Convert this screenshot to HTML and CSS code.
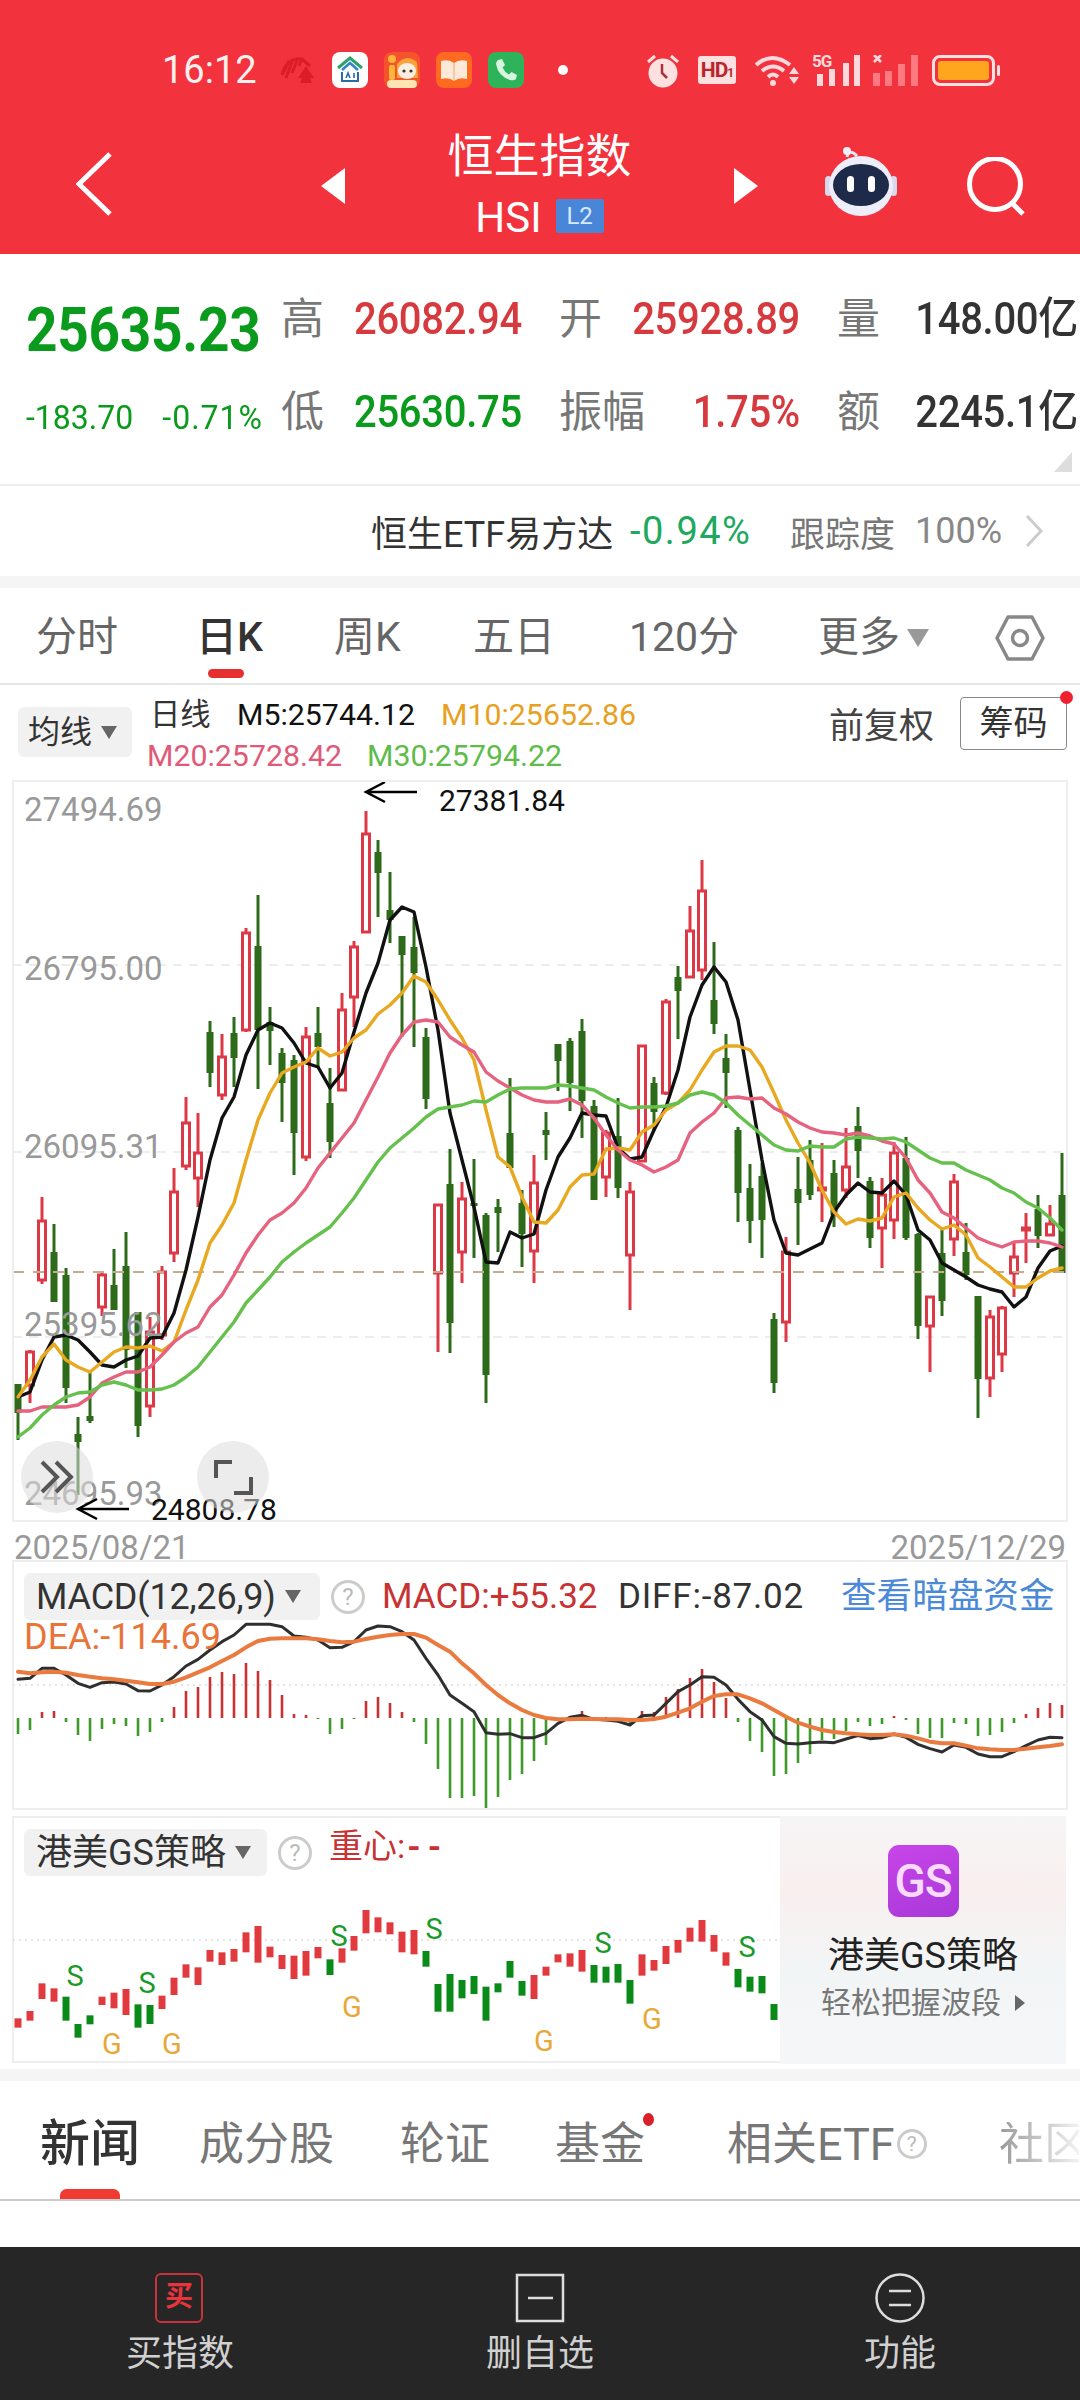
FILE: index.html
```html
<!DOCTYPE html>
<html lang="zh-CN">
<head>
<meta charset="utf-8">
<title>恒生指数</title>
<link rel="stylesheet" href="styles.css">
</head>
<body>
<header class="top">
  <div class="status">
    <span class="clock">16:12</span>
    <svg class="ic shell" viewBox="0 0 35 27"><g fill="none" stroke="#dc1c28" stroke-width="3"><path d="M2 18 9 4M6 21 13 2M12 16 18 1M19 9 22 2M2 18C4 8 12 0 22 2L30 9"/></g><path d="M26 9 34 21H30L32 26H20L22 21H18Z" fill="#dc1c28"/></svg>
    <svg class="ic app" viewBox="0 0 36 36"><rect width="36" height="36" rx="8" fill="#fff"/><path d="M6 16 18 6 30 16" fill="none" stroke="#2fa36b" stroke-width="3"/><path d="M10 18 18 11 26 18" fill="none" stroke="#2f86c8" stroke-width="2.5"/><path d="M10 20V29H26V20" fill="none" stroke="#2b6ca8" stroke-width="2"/><path d="M14 26 16 21 18 26M22 21V26" fill="none" stroke="#2b6ca8" stroke-width="1.6"/></svg>
    <svg class="ic app" viewBox="0 0 36 36"><rect width="36" height="36" rx="8" fill="#f4532c"/><circle cx="8" cy="7" r="4" fill="#ffb53a"/><rect x="5" y="13" width="6" height="15" rx="2" fill="#ffb53a"/><path d="M13 12Q22 1 33 10L34 26H13Z" fill="#f7a23a"/><ellipse cx="23" cy="19" rx="9" ry="8" fill="#fbeee0"/><circle cx="20" cy="19" r="1.6" fill="#333"/><circle cx="27" cy="19" r="1.6" fill="#333"/><rect x="3" y="28" width="30" height="8" rx="4" fill="#ffe3b0"/></svg>
    <svg class="ic app" viewBox="0 0 36 36"><rect width="36" height="36" rx="8" fill="#ff6a20"/><path d="M5 9Q13 7 18 11Q23 7 31 9V27Q23 25 18 29Q13 25 5 27Z" fill="#fde9d8"/><path d="M18 11V29" stroke="#f5b88f" stroke-width="1.4"/></svg>
    <svg class="ic app" viewBox="0 0 36 36"><rect width="36" height="36" rx="8" fill="#2fb35a"/><path d="M10 8 14 7 17 13 14.5 15.5Q16.5 20 21 22.5L23.5 20 29 23 28 27Q26 29 22 28Q10 24 8 12Q8 10 10 8Z" fill="#d8f5df"/></svg>
    <span class="dot"></span>
    <svg class="ic alarm" viewBox="0 0 32 35"><circle cx="16" cy="20" r="14.5" fill="#fde0e0"/><path d="M1 9 8 3M31 9 24 3" stroke="#fde0e0" stroke-width="3"/><path d="M15 11V20L20 25" fill="none" stroke="#a83038" stroke-width="2.5"/></svg>
    <span class="hd">HD<small>1</small></span>
    <svg class="ic wifi" viewBox="0 0 45 32"><g fill="none" stroke="#ffd9dc" stroke-width="4"><path d="M1 11Q17-3 35 11"/><path d="M7 17Q18 8 29 17"/><path d="M13 23Q18 18 23 23"/></g><circle cx="18" cy="29" r="3" fill="#ffd9dc"/><path d="M39 13 44 20H34ZM34 23H44L39 30Z" fill="#ffd9dc"/></svg>
    <div class="signal">
      <span class="net">5G</span>
      <svg class="bars" viewBox="0 0 45 31"><path d="M2 19H8V31H2ZM14 14H20V31H14ZM28 8H34V31H28ZM39 0H45V31H39Z" fill="#ffd9dc"/></svg>
    </div>
    <svg class="ic sig2" viewBox="0 0 46 31"><path d="M1 0 8 7M8 0 1 7" stroke="#ffd9dc" stroke-width="2.6"/><path d="M0 18H7V31H0ZM12 16H19V31H12ZM25 9H32V31H25ZM38 0H45V31H38Z" fill="#ff7a80"/></svg>
    <div class="battery"><i></i></div>
  </div>
  <nav class="nav">
    <svg class="back" viewBox="0 0 36 64"><path d="M34 2 3 32 34 62" fill="none" stroke="#fff" stroke-width="5"/></svg>
    <span class="tri tri-left"></span>
    <div class="title">
      <h1>恒生指数</h1>
      <div class="code">HSI<b>L2</b></div>
    </div>
    <span class="tri tri-right"></span>
    <svg class="robot" viewBox="0 0 72 72"><path d="M22 11Q24 2 32 10" fill="none" stroke="#e8e8f4" stroke-width="3"/><circle cx="22" cy="5" r="4" fill="#f0eef8"/><rect x="0" y="30" width="7" height="20" rx="3.500" fill="#d8d8ee"/><rect x="65" y="30" width="7" height="20" rx="3.500" fill="#d8d8ee"/><ellipse cx="36" cy="40" rx="32" ry="30" fill="#eeeefa"/><ellipse cx="36" cy="39" rx="28" ry="21" fill="#1e2a4a"/><rect x="22" y="30" width="7" height="16" rx="3.500" fill="#fff"/><rect x="43" y="30" width="7" height="16" rx="3.500" fill="#fff"/></svg>
    <svg class="search" viewBox="0 0 60 60"><circle cx="28" cy="27" r="25.500" fill="none" stroke="#fff" stroke-width="5"/><path d="M45 46 56 57" stroke="#fff" stroke-width="5"/></svg>
  </nav>
</header>

<section class="quote">
  <div class="price down">25635.23</div>
  <span class="label">高</span><span class="val up">26082.94</span>
  <div class="pair"><span class="label">开</span><span class="val up">25928.89</span></div>
  <div class="pair far"><span class="label">量</span><span class="val dark">148.00亿</span></div>
  <div class="change down"><span>-183.70</span><span class="pct">-0.71%</span></div>
  <span class="label">低</span><span class="val down">25630.75</span>
  <div class="pair"><span class="label">振幅</span><span class="val up">1.75%</span></div>
  <div class="pair far"><span class="label">额</span><span class="val dark">2245.1亿</span></div>
  <span class="corner"></span>
</section>

<section class="etf">
  <span class="etf-name">恒生ETF易方达</span>
  <span class="etf-pct">-0.94%</span>
  <span class="etf-lbl">跟踪度</span>
  <span class="etf-num">100%</span>
  <svg class="chev" viewBox="0 0 18 34"><path d="M2 2 16 17 2 32" fill="none" stroke="#ccc" stroke-width="3"/></svg>
</section>

<div class="band"></div>

<div class="periods">
  <span>分时</span>
  <span class="on">日K</span>
  <span>周K</span>
  <span>五日</span>
  <span>120分</span>
  <span class="more">更多<i class="caret big"></i></span>
  <svg class="hex" viewBox="0 0 50 46"><path d="M13 2H37L48 23 37 44H13L2 23Z" fill="none" stroke="#888" stroke-width="3.500" stroke-linejoin="round"/><circle cx="25" cy="23" r="7.500" fill="none" stroke="#888" stroke-width="3.500"/></svg>
</div>

<div class="legend">
  <div class="pill ma-pill">均线<i class="caret"></i></div>
  <div class="ma-vals">
    <div class="ma-line"><span class="day">日线</span><span class="m5">M5:25744.12</span><span class="m10">M10:25652.86</span></div>
    <div class="ma-line"><span class="m20">M20:25728.42</span><span class="m30">M30:25794.22</span></div>
  </div>
  <span class="adjust">前复权</span>
  <span class="chips">筹码</span>
</div>

<svg id="kline" class="panel-svg kline" viewBox="12 780 1056 742">
  <g class="grid">
    <path d="M13 965H1066M13 1152H1066M13 1337H1066"/>
  </g>
  <g id="candles"></g>
  <path class="base" d="M13 1272H1066"/>
  <g id="averages"></g>
  <text class="axis" x="24" y="821">27494.69</text>
  <text class="axis" x="24" y="980">26795.00</text>
  <text class="axis" x="24" y="1158">26095.31</text>
  <text class="axis" x="24" y="1336">25395.62</text>
  <text class="axis" x="24" y="1505">24695.93</text>
  <path class="arrow" d="M417 792H366M385 782 366 792 385 802"/>
  <text class="peak" x="439" y="811">27381.84</text>
  <path class="arrow" d="M129 1509H78M97 1499 78 1509 97 1519"/>
  <text class="peak" x="151" y="1520">24808.78</text>
  <circle class="fab" cx="57" cy="1477" r="36"/>
  <path class="fab-mark" d="M42 1462 57 1477 42 1492M56 1462 71 1477 56 1492"/>
  <circle class="fab" cx="233" cy="1477" r="36"/>
  <path class="fab-mark" d="M216 1478V1462H232M251 1477V1493H234"/>
</svg>

<div class="dates"><span>2025/08/21</span><span>2025/12/29</span></div>

<div class="panel macd">
  <svg id="macd" class="panel-svg" viewBox="12 1560 1056 250">
    <path class="dots" d="M13 1685H1066"/>
    <g id="hist"></g>
    <g id="macd-lines"></g>
  </svg>
  <div class="panel-head">
    <div class="pill macd-pill">MACD(12,26,9)<i class="caret"></i></div>
    <span class="help">?</span>
    <span class="mv up-d">MACD:+55.32</span>
    <span class="mv diff">DIFF:-87.02</span>
    <span class="mv link">查看暗盘资金</span>
    <span class="mv dea">DEA:-114.69</span>
  </div>
</div>

<div class="panel gs">
  <div class="gs-chart">
    <svg id="gs" viewBox="12 1816 768 247">
      <path class="dots" d="M13 1940H780"/>
      <g id="gs-bars"></g>
      <g class="sig-s">
        <text x="75" y="1986">S</text><text x="147" y="1993">S</text><text x="339" y="1946">S</text>
        <text x="434" y="1939">S</text><text x="603" y="1953">S</text><text x="747" y="1957">S</text>
      </g>
      <g class="sig-g">
        <text x="112" y="2054">G</text><text x="172" y="2054">G</text><text x="352" y="2017">G</text>
        <text x="544" y="2051">G</text><text x="652" y="2029">G</text>
      </g>
    </svg>
    <div class="panel-head">
      <div class="pill gs-pill">港美GS策略<i class="caret"></i></div>
      <span class="help">?</span>
      <span class="mv gravity">重心:<span class="dash">--</span></span>
    </div>
  </div>
  <aside class="promo">
    <div class="promo-logo">GS</div>
    <div class="promo-name">港美GS策略</div>
    <div class="promo-sub">轻松把握波段<i class="promo-arrow"></i></div>
  </aside>
</div>

<div class="band after-gs"></div>

<div class="news-tabs">
  <span class="on">新闻<i class="mark"></i></span>
  <span>成分股</span>
  <span>轮证</span>
  <span class="fund">基金<i class="red-dot"></i></span>
  <span class="rel">相关ETF<em class="help small">?</em></span>
  <span class="fade">社区</span>
</div>

<div class="blank"></div>

<footer class="actions">
  <div class="act">
    <div class="buy-icon">买</div>
    <span>买指数</span>
  </div>
  <div class="act">
    <svg class="act-icon" viewBox="0 0 50 50"><path d="M2 2H48V48H2Z" fill="none" stroke="#ddd" stroke-width="2.500"/><path d="M13 25H38" stroke="#ddd" stroke-width="2.500"/></svg>
    <span>删自选</span>
  </div>
  <div class="act">
    <svg class="act-icon" viewBox="0 0 50 50"><circle cx="25" cy="25" r="23.500" fill="none" stroke="#ddd" stroke-width="2.500"/><path d="M14 18H36M14 32H36" stroke="#ddd" stroke-width="2.500"/></svg>
    <span>功能</span>
  </div>
</footer>
<script src="chart.js"></script>
</body>
</html>
```

FILE: styles.css
```css
* { box-sizing: border-box; }
html, body { margin: 0; padding: 0; }
body {
  width: 1080px;
  height: 2400px;
  overflow: hidden;
  background: #fff;
  font-family: Roboto, "Noto Sans CJK SC", sans-serif;
  color: #333;
}
i, em { font-style: normal; }

/* red page header */
.top { height: 254px; background: #f2323c; color: #fff; }
.status { height: 100px; padding: 40px 0 0 162px; display: flex; align-items: center; }
.clock { font-size: 38px; width: 118px; color: #fdf0f0; }
.ic { display: block; flex: none; }
.shell { width: 35px; height: 27px; margin-right: 17px; }
.app { width: 36px; height: 36px; margin-right: 16px; }
.dot { width: 10px; height: 10px; border-radius: 50%; background: #fff; margin: 0 79px 0 18px; }
.alarm { width: 32px; height: 35px; margin-right: 19px; }
.hd {
  width: 38px; height: 28px; margin-right: 19px;
  background: #fde0e0; border-radius: 3px; color: #b8262e;
  font-size: 21px; font-weight: 700; line-height: 28px; text-align: center; letter-spacing: -1px;
  white-space: nowrap; overflow: hidden;
}
.hd small { font-size: 12px; }
.wifi { width: 45px; height: 32px; margin-right: 12px; }
.signal { position: relative; width: 48px; height: 32px; margin-right: 13px; }
.net { position: absolute; left: 0; top: -3px; font-size: 17px; font-weight: 700; color: #ffd9dc; line-height: 20px; letter-spacing: -1px; }
.bars { position: absolute; left: 3px; bottom: 0; width: 45px; height: 31px; }
.sig2 { width: 46px; height: 31px; margin-right: 13px; }
.battery { position: relative; width: 63px; height: 31px; border: 3px solid #fde0e0; border-radius: 8px; padding: 3px; }
.battery::after { content: ""; position: absolute; right: -8px; top: 7px; width: 3px; height: 11px; background: #fde0e0; border-radius: 2px; }
.battery i { display: block; height: 100%; background: #ffa51e; border-radius: 3px; }

.nav { height: 154px; display: flex; align-items: flex-start; }
.back { width: 36px; height: 64px; margin: 52px 0 0 76px; }
.tri { width: 0; height: 0; margin-top: 68px; border-top: 18px solid transparent; border-bottom: 18px solid transparent; }
.tri-left { margin-left: 209px; border-right: 24px solid #fff; }
.tri-right { border-left: 24px solid #fff; }
.title { width: 389px; text-align: center; }
.title h1 { margin: 30px 0 0; font-size: 46px; font-weight: 400; line-height: 52px; }
.code { margin-top: 17px; display: flex; justify-content: center; align-items: center; height: 36px; font-size: 42px; }
.code b { margin: 0 0 2px 14px; width: 48px; height: 34px; background: #4a86d8; color: #d9eaff; font-size: 24px; font-weight: 400; line-height: 34px; text-align: center; border-radius: 2px; }
.robot { width: 72px; height: 72px; margin: 46px 0 0 67px; }
.search { width: 60px; height: 60px; margin: 57px 0 0 70px; }

/* quote figures */
.quote {
  position: relative;
  height: 232px;
  padding: 19px 0 0 26px;
  border-bottom: 2px solid #ececec;
  display: grid;
  grid-template-columns: 256px 72px 206px 240px 278px;
  grid-auto-rows: 93px;
  align-items: center;
}
.label { font-size: 43px; color: #777; line-height: 1; margin-left: -1px; }
.val { font-size: 40px; font-weight: 500; letter-spacing: -.3px; line-height: 1; display: inline-block; transform: scaleY(1.1); }
.up { color: #d63a3e; }
.down { color: #0a9a1c; }
.dark { color: #333; }
.price { font-size: 55px; font-weight: 700; letter-spacing: -.3px; padding-top: 18px; transform: scaleY(1.1); }
.change { font-size: 32px; padding-top: 8px; display: flex; width: 237px; justify-content: space-between; transform: scaleY(1.05); }
.pct { letter-spacing: 1px; }
.pair { display: flex; justify-content: space-between; align-items: center; }
.far { padding-left: 38px; }
.corner { position: absolute; right: 8px; bottom: 12px; width: 18px; height: 20px; background: #ddd; clip-path: polygon(100% 0, 100% 100%, 0 100%); }

.etf { height: 90px; display: flex; align-items: center; padding-left: 371px; white-space: nowrap; }
.etf-name { font-size: 36px; color: #333; width: 259px; }
.etf-pct { font-size: 38px; color: #1ea860; width: 160px; letter-spacing: 1.500px; }
.etf-lbl { font-size: 35px; color: #777; width: 125px; }
.etf-num { font-size: 36px; color: #888; width: 110px; }
.chev { width: 18px; height: 34px; }

.band { height: 12px; background: #f5f5f5; }

/* period tabs */
.periods {
  position: relative;
  height: 97px;
  padding: 4px 35px 0 36px;
  border-bottom: 2px solid #e6e6e6;
  display: grid;
  grid-template-columns: 160px 138px 139px 156px 189px 177px 50px;
  align-items: center;
  font-size: 41px;
  color: #666;
  line-height: 1;
}
.periods .on { position: relative; color: #333; font-weight: 500; }
.periods .on::after { content: ""; position: absolute; left: 12px; top: 52px; width: 36px; height: 9px; background: #e5302f; border-radius: 5px; }
.more { display: flex; align-items: center; }
.caret { display: inline-block; width: 0; height: 0; border-left: 8px solid transparent; border-right: 8px solid transparent; border-top: 13px solid #666; margin-left: 9px; }
.caret.big { border-left-width: 11px; border-right-width: 11px; border-top-width: 18px; border-top-color: #999; margin-left: 7px; }
.hex { width: 50px; height: 46px; }

/* moving-average legend */
.legend { height: 95px; display: flex; position: relative; }
.pill { background: #f1f1f1; border-radius: 6px; display: flex; align-items: center; color: #333; line-height: 1; white-space: nowrap; }
.ma-pill { width: 114px; height: 50px; margin: 22px 0 0 18px; padding-left: 10px; font-size: 32px; }
.ma-vals { margin-left: 16px; padding-top: 9px; font-size: 30.300px; line-height: 41px; white-space: nowrap; width: 679px; }
.ma-line { display: flex; }
.day { width: 89px; color: #333; padding-left: 2px; }
.m5 { width: 204px; color: #111; }
.m10 { color: #e8a020; }
.m20 { width: 220px; color: #e05a78; margin-left: -1px; }
.m30 { color: #5ebc4a; }
.adjust { font-size: 35px; color: #444; line-height: 1; margin: 24px 0 0 2px; width: 131px; }
.chips { width: 107px; height: 53px; margin-top: 12px; border: 1.500px solid #888; border-radius: 4px; font-size: 34px; line-height: 50px; text-align: center; color: #333; position: relative; }
.chips::after { content: ""; position: absolute; right: -7px; top: -7px; width: 13px; height: 13px; border-radius: 50%; background: #f02030; }

/* drawn charts */
.panel-svg { display: block; overflow: visible; outline: 2px solid #eee; outline-offset: -2px; margin-left: 12px; }
.kline { width: 1056px; height: 742px; }
.grid path { stroke: #e8e8e8; stroke-width: 1.500; stroke-dasharray: 9 7; fill: none; }
.base { stroke: #c4ad8f; stroke-width: 2; stroke-dasharray: 11 9; fill: none; }
.axis { font-size: 33px; fill: #999; font-family: Roboto, sans-serif; }
.peak { font-size: 30px; fill: #111; font-family: Roboto, sans-serif; }
.arrow { fill: none; stroke: #000; stroke-width: 2.500; }
.fab { fill: #dcdcdc; fill-opacity: .55; }
.fab-mark { fill: none; stroke: #555; stroke-width: 4; }
.body-up { fill: #fff; stroke: #dc3845; stroke-width: 3; }
.body-down { fill: #2d6b1a; }
.wick-up { stroke: #dc3845; stroke-width: 3; }
.wick-down { stroke: #2d6b1a; stroke-width: 3; }
.ln { fill: none; stroke-width: 3.400; stroke-linejoin: round; stroke-linecap: round; }
.ma5 { stroke: #111; }
.ma10 { stroke: #e8a820; }
.ma20 { stroke: #e6627e; }
.ma30 { stroke: #66c04e; }
.dates { height: 38px; padding: 8px 14px 0 14px; display: flex; justify-content: space-between; font-size: 33px; color: #999; line-height: 36px; }

.panel { position: relative; }
.macd #macd { width: 1056px; height: 250px; }
.dots { stroke: #ddd; stroke-width: 1.500; stroke-dasharray: 2 4; fill: none; }
.hist-up { stroke: #c83232; stroke-width: 2.600; }
.hist-down { stroke: #3d9a28; stroke-width: 2.600; }
.ln.diffline { stroke: #2f2f2f; stroke-width: 3; }
.ln.dealine { stroke: #ea7a3e; stroke-width: 4; }
.panel-head { position: absolute; left: 24px; top: 13px; right: 14px; display: flex; flex-wrap: wrap; align-items: center; white-space: nowrap; }
.macd-pill { width: 296px; height: 47px; padding-left: 12px; font-size: 36px; letter-spacing: -.2px; }
.help {
  display: inline-block; width: 34px; height: 34px; margin-left: 11px;
  border: 3px solid #ccc; border-radius: 50%; color: #bbb;
  font-size: 24px; line-height: 28px; text-align: center;
}
.help.small { width: 30px; height: 30px; margin-left: 2px; font-size: 21px; line-height: 25px; }
.mv { font-size: 35px; line-height: 47px; }
.up-d { color: #c83232; margin-left: 17px; width: 236px; }
.diff { color: #333; width: 223px; letter-spacing: .8px; }
.link { color: #4a8ad8; font-size: 35.600px; }
.dea { width: 100%; color: #e8743a; font-size: 36px; line-height: 40px; margin-top: -3px; }

.gs { margin-top: 6px; display: flex; height: 247px; padding-left: 12px; }
.gs-chart { position: relative; width: 768px; box-shadow: inset 2px 2px 0 #eee, inset 0 -2px 0 #eee; }
#gs { display: block; width: 768px; height: 247px; }
.gs-chart .panel-head { left: 12px; top: 13px; }
.gs-pill { width: 243px; height: 47px; padding-left: 12px; font-size: 36px; }
.gravity { color: #c83232; font-size: 34px; margin: -13px 0 0 17px; }
.dash { font-weight: 700; letter-spacing: 7px; margin-left: 2px; }
.gs-bar-up { stroke: #e03a3e; stroke-width: 7; }
.gs-bar-down { stroke: #0a8a18; stroke-width: 7; }
.sig-s text, .sig-g text { font-size: 29px; text-anchor: middle; font-family: Roboto, sans-serif; }
.sig-s text { fill: #1a9a2a; }
.sig-g text { fill: #e8a838; }
.promo {
  width: 286px; height: 248px;
  background: linear-gradient(180deg, #f6f5f6 0, #f9efef 30%, #f2f5f6 62%, #f5f6f7 100%);
  display: flex; flex-direction: column; align-items: center;
}
.promo-logo {
  width: 71px; height: 72px; margin-top: 29px;
  background: linear-gradient(160deg, #c845e8, #a838d8);
  border-radius: 11px; color: #fbdcff;
  font-size: 46px; font-weight: 500; line-height: 72px; text-align: center; letter-spacing: -1px;
}
.promo-name { font-size: 36px; color: #222; line-height: 44px; margin-top: 17px; }
.promo-sub { display: flex; align-items: center; font-size: 30px; color: #777; line-height: 40px; margin-top: 5px; }
.promo-arrow { width: 0; height: 0; margin-left: 14px; border-top: 8px solid transparent; border-bottom: 8px solid transparent; border-left: 10px solid #666; }

.after-gs { margin-top: 6px; }

/* lower tabs */
.news-tabs {
  height: 120px;
  padding: 8px 0 0 40px;
  border-bottom: 2px solid #ccc;
  display: grid;
  grid-template-columns: 159px 201px 155px 172px 272px 80px;
  align-items: center;
  font-size: 45px;
  color: #777;
  line-height: 1;
  white-space: nowrap;
  overflow: hidden;
}
.news-tabs span { position: relative; }
.news-tabs .on { color: #333; font-size: 50px; font-weight: 500; }
.mark { position: absolute; left: 20px; top: 70px; width: 60px; height: 13px; background: #f03a32; border-radius: 7px 7px 0 0 / 7px; }
.red-dot { position: absolute; left: 88px; top: -9px; width: 11px; height: 13px; border-radius: 50%; background: #d8202a; }
.rel { display: flex; align-items: center; }
.fade { background: linear-gradient(90deg, #999, #f2f2f2); -webkit-background-clip: text; background-clip: text; color: transparent; }

.blank { height: 46px; }

/* bottom action bar */
.actions { height: 153px; background: #262626; display: flex; }
.act { width: 360px; display: flex; flex-direction: column; align-items: center; padding-top: 26px; }
.act span { font-size: 36px; line-height: 44px; color: #d0d0d0; margin-top: 9px; }
.act-icon { width: 50px; height: 50px; display: block; }
.buy-icon {
  width: 48px; height: 50px; margin-left: -2px;
  border: 2.500px solid #c8323a; border-radius: 6px;
  color: #e8343c; font-size: 28px; font-weight: 700; line-height: 44px; text-align: center;
}
```

FILE: chart.js
```js
// Daily candles for the index: [high, body top, body bottom, low, direction].
// Figures are plot coordinates, so the SVG viewBoxes use the page's y scale.
const candles = [
  [1384,1384,1413,1440,'g'],[1350,1352,1385,1403,'r'],[1197,1221,1280,1284,'r'],[1224,1252,1302,1302,'g'],
  [1268,1275,1388,1403,'g'],[1417,1434,1442,1495,'g'],[1370,1416,1421,1423,'g'],[1273,1275,1307,1316,'r'],
  [1249,1285,1310,1310,'g'],[1232,1266,1350,1368,'g'],[1312,1312,1426,1437,'g'],[1317,1332,1406,1417,'r'],
  [1266,1272,1335,1340,'r'],[1168,1192,1253,1262,'r'],[1097,1123,1166,1170,'r'],[1113,1153,1178,1207,'r'],
  [1021,1032,1073,1087,'g'],[1034,1057,1095,1100,'r'],[1017,1033,1058,1087,'g'],[928,933,1030,1032,'r'],
  [895,946,1030,1089,'g'],[1007,1022,1031,1065,'g'],[1048,1053,1083,1122,'g'],[1055,1060,1133,1175,'g'],
  [1027,1037,1157,1161,'r'],[1007,1033,1047,1067,'g'],[1068,1103,1142,1158,'g'],[993,1010,1090,1091,'r'],
  [941,947,997,1027,'r'],[811,834,932,932,'r'],[840,852,873,917,'g'],[872,910,920,943,'g'],
  [936,936,955,1037,'g'],[917,947,973,1047,'g'],[1028,1037,1099,1109,'g'],[1205,1205,1273,1352,'r'],
  [1149,1184,1323,1353,'g'],[1182,1199,1252,1283,'r'],[1159,1203,1206,1258,'g'],[1213,1215,1375,1403,'g'],
  [1199,1207,1213,1252,'g'],[1078,1133,1168,1168,'g'],[1190,1203,1234,1267,'g'],[1155,1183,1251,1283,'r'],
  [1112,1130,1135,1160,'g'],[1044,1044,1061,1091,'g'],[1038,1041,1083,1111,'g'],[1019,1031,1101,1138,'g'],
  [1100,1106,1200,1200,'g'],[1130,1133,1177,1197,'r'],[1098,1136,1188,1198,'g'],[1182,1192,1255,1310,'r'],
  [1045,1046,1161,1161,'r'],[1077,1083,1112,1131,'g'],[999,1002,1093,1095,'r'],[966,977,991,1039,'g'],
  [906,931,977,978,'r'],[860,891,970,980,'r'],[942,1000,1024,1034,'g'],[1034,1058,1073,1108,'g'],
  [1127,1130,1193,1222,'g'],[1164,1188,1221,1243,'g'],[1163,1176,1220,1258,'g'],[1313,1319,1383,1393,'g'],
  [1237,1252,1322,1342,'r'],[1157,1189,1203,1245,'g'],[1140,1160,1195,1200,'g'],[1143,1188,1190,1222,'r'],
  [1160,1173,1215,1227,'g'],[1128,1167,1190,1198,'r'],[1107,1126,1151,1178,'g'],[1177,1181,1238,1248,'g'],
  [1178,1195,1228,1268,'r'],[1142,1153,1220,1239,'r'],[1137,1158,1238,1240,'g'],[1233,1234,1326,1339,'g'],
  [1297,1297,1326,1372,'r'],[1229,1253,1301,1316,'g'],[1174,1182,1239,1256,'r'],[1223,1252,1275,1280,'g'],
  [1296,1296,1379,1418,'g'],[1310,1317,1378,1397,'r'],[1306,1308,1354,1372,'r'],[1243,1257,1273,1297,'r'],
  [1213,1228,1230,1263,'r'],[1195,1209,1236,1248,'g'],[1205,1224,1235,1235,'r'],[1153,1195,1273,1273,'g']
];

const averages = {
  ma5: [1397,1392,1360,1337,1335,1340,1352,1365,1367,1360,1356,1338,1337,1313,1270,1217,1160,1118,1097,1055,1030,1023,1028,1043,1063,1067,1088,1073,1032,993,963,920,907,912,967,1030,1113,1160,1207,1262,1263,1232,1238,1234,1190,1157,1138,1113,1115,1116,1148,1159,1157,1130,1107,1070,1017,985,967,982,1020,1090,1160,1220,1253,1255,1249,1243,1212,1195,1183,1192,1193,1181,1195,1230,1240,1263,1270,1277,1285,1289,1292,1307,1297,1268,1251,1246],
  ma10: [1397,1380,1357,1344,1360,1367,1372,1362,1352,1347,1348,1346,1351,1342,1310,1280,1243,1225,1203,1160,1120,1093,1073,1067,1062,1048,1056,1052,1038,1030,1014,1005,993,976,982,1000,1020,1038,1060,1110,1157,1167,1197,1222,1223,1210,1187,1175,1174,1149,1148,1150,1132,1125,1110,1103,1090,1070,1052,1046,1046,1050,1067,1093,1120,1143,1163,1190,1212,1224,1219,1221,1218,1197,1193,1208,1220,1229,1225,1235,1258,1267,1277,1287,1287,1278,1271,1268],
  ma20: [1411,1411,1407,1407,1407,1405,1397,1383,1377,1372,1372,1367,1355,1342,1333,1327,1307,1295,1275,1253,1235,1220,1213,1203,1188,1168,1153,1138,1123,1100,1077,1053,1035,1022,1020,1022,1037,1045,1052,1072,1081,1088,1095,1100,1102,1102,1099,1105,1118,1135,1150,1160,1165,1172,1167,1160,1133,1122,1113,1098,1097,1099,1098,1108,1114,1122,1128,1132,1133,1135,1133,1136,1141,1144,1158,1180,1193,1212,1218,1228,1238,1243,1247,1242,1241,1241,1243,1247],
  ma30: [1437,1428,1415,1405,1397,1393,1392,1385,1382,1385,1390,1390,1389,1385,1377,1367,1352,1337,1322,1303,1290,1277,1262,1252,1243,1235,1227,1213,1198,1180,1162,1148,1138,1128,1117,1109,1107,1105,1101,1102,1095,1089,1088,1088,1088,1085,1086,1088,1090,1097,1103,1108,1107,1107,1106,1103,1095,1092,1095,1103,1115,1125,1135,1145,1150,1151,1146,1147,1147,1139,1137,1138,1139,1138,1142,1150,1158,1163,1163,1170,1175,1180,1188,1193,1202,1208,1218,1230]
};

// MACD histogram bar lengths in px; positive bars rise above the zero line.
const histogram = [-16,-12,6,7,-4,-17,-23,-11,-6,-8,-18,-14,-4,11,27,31,41,46,44,55,47,38,23,4,3,-1,-16,-11,-1,17,21,15,6,-4,-26,-51,-80,-80,-78,-92,-79,-62,-56,-43,-27,-2,2,7,1,1,-2,-6,7,6,21,29,40,49,36,20,-4,-23,-34,-58,-56,-45,-36,-22,-21,-13,-4,-8,-6,2,-2,-16,-20,-20,-5,-6,-18,-17,-14,-5,4,10,15,13];

// DIFF and DEA curves, stored in thirds of a px below the panel's top edge.
const diff = [358,355,325,325,345,370,382,368,366,372,392,393,375,350,318,298,270,245,225,193,193,193,200,228,232,240,263,262,245,210,198,200,215,240,295,345,405,430,455,518,523,521,533,533,520,490,472,466,478,480,484,495,467,465,430,395,375,350,352,375,418,455,480,530,550,552,548,546,548,537,527,536,533,522,532,553,566,576,555,562,582,590,590,575,557,540,532,533];
const dea = [335,340,337,335,338,345,350,355,358,362,367,372,372,365,352,337,322,303,285,262,243,236,235,235,235,238,243,247,245,237,230,225,222,222,233,255,275,310,340,375,405,430,450,465,474,478,478,476,477,478,478,480,480,477,470,458,445,425,408,403,403,415,430,450,470,488,500,510,516,520,523,525,525,523,527,535,545,550,550,557,565,568,570,570,566,562,558,553];

// Strategy sub-chart bars: [top, bottom, direction], also in thirds of a px.
const strategy = [
  [595,623,'r'],[573,602,'r'],[490,537,'r'],[505,545,'r'],[530,602,'g'],[612,653,'g'],[586,613,'g'],[530,555,'r'],
  [518,565,'r'],[507,585,'r'],[553,623,'g'],[555,612,'g'],[527,567,'r'],[473,525,'r'],[433,473,'r'],[442,495,'r'],
  [390,425,'r'],[397,435,'r'],[387,425,'r'],[337,397,'r'],[318,428,'r'],[380,412,'r'],[405,447,'r'],[407,477,'r'],
  [393,467,'r'],[381,415,'r'],[418,465,'g'],[385,428,'r'],[348,392,'r'],[270,340,'r'],[292,337,'r'],[307,343,'r'],
  [335,397,'r'],[330,403,'r'],[393,440,'g'],[492,575,'g'],[462,575,'g'],[480,535,'g'],[468,522,'g'],[500,602,'g'],
  [490,517,'g'],[423,473,'g'],[483,527,'g'],[465,537,'r'],[440,467,'r'],[403,427,'r'],[400,440,'r'],[390,455,'r'],
  [435,488,'g'],[440,488,'g'],[432,488,'g'],[480,551,'g'],[403,467,'r'],[420,452,'r'],[378,432,'r'],[360,398,'r'],
  [323,365,'r'],[300,365,'r'],[345,395,'r'],[397,437,'r'],[447,502,'g'],[470,515,'g'],[468,520,'g'],[552,600,'g']
];

const SVG_NS = 'http://www.w3.org/2000/svg';
const slotX = i => 18 + 12 * i;

function add(parent, tag, attrs) {
  const el = document.createElementNS(SVG_NS, tag);
  for (const k in attrs) el.setAttribute(k, attrs[k]);
  parent.appendChild(el);
  return el;
}

function line(parent, cls, x, y1, y2) {
  add(parent, 'line', { class: cls, x1: x, x2: x, y1, y2 });
}

function curve(parent, cls, ys, toY) {
  const points = ys.map((v, i) => `${slotX(i)},${toY(v)}`).join(' ');
  add(parent, 'polyline', { class: 'ln ' + cls, points });
}

const candleLayer = document.getElementById('candles');
candles.forEach(([high, top, bottom, low, dir], i) => {
  const x = slotX(i);
  if (dir === 'r') {
    line(candleLayer, 'wick-up', x, high, top);
    line(candleLayer, 'wick-up', x, bottom, low);
    add(candleLayer, 'rect', { class: 'body-up', x: x - 3.5, y: top, width: 7, height: bottom - top });
  } else {
    line(candleLayer, 'wick-down', x, high, low);
    add(candleLayer, 'rect', { class: 'body-down', x: x - 3.5, y: top, width: 7, height: bottom - top });
  }
});

const averageLayer = document.getElementById('averages');
Object.keys(averages).forEach(name => curve(averageLayer, name, averages[name], v => v));

const ZERO_Y = 1718;
const histLayer = document.getElementById('hist');
histogram.forEach((h, i) => {
  line(histLayer, h > 0 ? 'hist-up' : 'hist-down', slotX(i), ZERO_Y, ZERO_Y - h);
});

const macdLayer = document.getElementById('macd-lines');
const macdY = v => 1560 + v / 3;
curve(macdLayer, 'diffline', diff, macdY);
curve(macdLayer, 'dealine', dea, macdY);

const gsLayer = document.getElementById('gs-bars');
const gsY = v => 1820 + v / 3;
strategy.forEach(([top, bottom, dir], i) => {
  line(gsLayer, dir === 'r' ? 'gs-bar-up' : 'gs-bar-down', slotX(i), gsY(top), gsY(bottom));
});
```
